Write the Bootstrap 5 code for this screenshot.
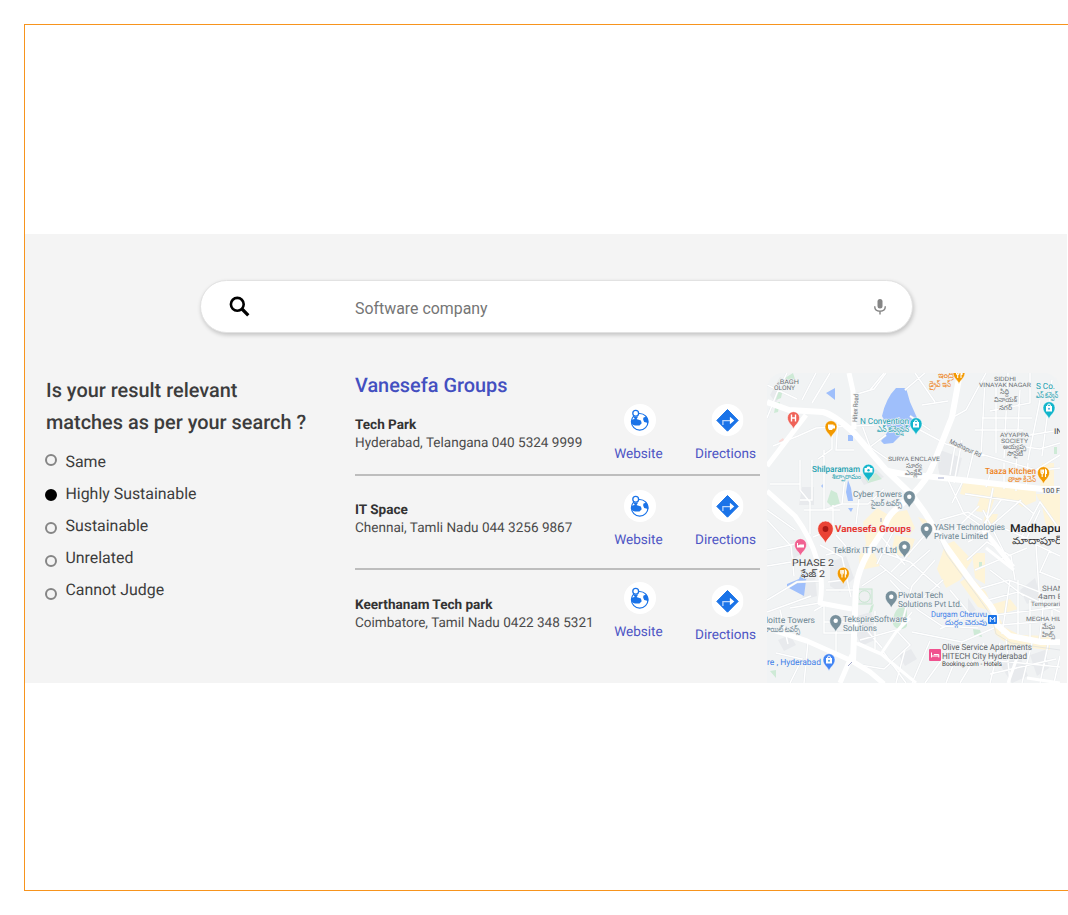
<!DOCTYPE html>
<html lang="en">
<head>
<meta charset="utf-8">
<meta name="viewport" content="width=device-width, initial-scale=1">
<title>Search relevance</title>
<link href="https://cdn.jsdelivr.net/npm/bootstrap@5.3.0/dist/css/bootstrap.min.css" rel="stylesheet">
<style>
body{font-family:Roboto,sans-serif;background:#fff;overflow:hidden;color:#3c3c3c;text-rendering:geometricPrecision}
.frame{margin:24px 0 0 24px;height:867px;border:1px solid #f7941d;border-right:0;padding-top:209px}
.panel{background:#f4f4f4;height:449px;width:1042px;padding-top:46px}
.searchbar{width:713px;height:53px;margin-left:175px;border-radius:27px;border:1px solid #e2e2e2;background:#fff;box-shadow:1px 2px 4px rgba(0,0,0,.2);padding:0 25px 0 28px}
.searchbar input{border:0;outline:0;background:none;margin-left:104px;padding:4px 0 0;font-size:15.900px;color:#757575}
.searchbar input::placeholder{color:#757575;opacity:1}
.columns{display:grid;grid-template-columns:310px 405px 300px;column-gap:0;padding-left:20px;margin-top:40px;height:310px}
.ask{font-size:19.900px;line-height:32px;font-weight:500;margin:2px 0 0 1px}
.choices{margin-top:7px}
.choice{height:32px;font-size:15.900px;line-height:32px}
.choice input{appearance:none;width:12px;height:12px;border:2px solid #858585;border-radius:50%;margin:0 8.500px 0 0;flex:none}
.choice input:checked{background:#000;border-color:#000}
.company{font-size:19.900px;line-height:24px;font-weight:500;color:#434fc0;margin:1px 0 0}
.place{border-bottom:2px solid #bdbdbd}
.place:last-child{border:0}
.addr{width:253px;font-size:13.550px;line-height:18px;white-space:nowrap;color:#4a4a4a}
.addr strong{display:block;font-weight:700;color:#333}
.act{font-size:13.550px;line-height:16px;color:#4d55c4;text-decoration:none;text-align:center}
.act svg{display:block;margin:0 auto 10px}
.act-web{margin-left:6px;width:49px}
.act-web svg{transform:translateX(1px)}
.act-dir{margin-left:32px;width:61px}
.act-dir svg{transform:translateX(1.500px)}
.mapbox{border-radius:16px 16px 0 0;overflow:hidden;margin-left:7px;width:293px;height:310px}
.mapbox text{font-family:Roboto,"Noto Sans",sans-serif;paint-order:stroke;stroke:#f1f3f4;stroke-width:1.5px;stroke-linejoin:round}
</style>
</head>
<body>
<svg width="0" height="0" class="position-absolute">
<defs>
<symbol id="globe" viewBox="0 0 32 32"><circle cx="16" cy="16" r="16" fill="#fff"/><circle cx="15.7" cy="17.8" r="8.300" fill="none" stroke="#1a73e8" stroke-width="1.2"/><path d="M7.300 15.800l4.400-1 5.200 1.800.8 2.700-2.200 2.100-4.500.1-2.200-.7-1.300-1.500zM19.300 13.700l3-1.500 2 3.400-.1 3.600-2-.8-2-.5-1-2.100z" fill="#1a73e8"/><path d="M11.700 16.500l-2.500-4h5z" fill="#1a73e8"/><circle cx="11.700" cy="9.300" r="2.900" fill="#fff" stroke="#1a73e8" stroke-width="1.300"/></symbol>
<symbol id="turn" viewBox="0 0 32 32"><circle cx="16" cy="16" r="16" fill="#fff"/><path d="M16 5.500l10.700 10.900L16 27.200 5.300 16.400z" fill="#1a73e8" stroke="#1a73e8" stroke-linejoin="round"/><path d="M11.400 21v-4.400h9" fill="none" stroke="#b9d5fb" stroke-width="1.300"/><path d="M18.400 12.800l4.400 3.700-4.400 3.700z" fill="#fff"/></symbol>
<path id="pin" d="M0 0C-1-4-6-6-6-11.300A6 6 0 0 1 6-11.300C6-6 1-4 0 0z"/>
<g id="fork" stroke="#fff" fill="none" stroke-width="1.1"><path d="M-2.500-14.500v3q0 1 1.200 1v3.500M-1.200-14.500v3M0-14.500v3q0 1-1.200 1M2-7v-7.500q1.500 1 1 4h-1"/></g>
<g id="shop"><path d="M-3-13h6v5.500h-6z" fill="#fff"/><path d="M-1.500-13q0-2 1.500-2t1.500 2" fill="none" stroke="#fff"/><circle cy="-10.200" r="1" fill="#4aa5dd"/></g>
</defs>
</svg>
<main class="frame">
<section class="panel">
<form class="searchbar d-flex align-items-center">
<svg width="22" height="22" viewBox="0 0 22 22"><circle cx="8.300" cy="8.300" r="6.400" fill="none" stroke="#000" stroke-width="2.600"/><path d="M13 13l6.300 6.300" stroke="#000" stroke-width="3.300"/></svg>
<input type="text" placeholder="Software company" aria-label="Search">
<svg class="ms-auto" width="14" height="18" viewBox="0 0 14 18"><rect x="4.500" y="1" width="5" height="9.500" rx="2.500" fill="#858585"/><path d="M1.700 8.200c0 3.200 2.300 5 5.300 5s5.300-1.800 5.300-5M7 13v3.500" fill="none" stroke="#858585" stroke-width="1.400"/></svg>
</form>
<div class="columns">
<div>
<h2 class="ask">Is your result relevant<br>matches as per your search ?</h2>
<div class="choices">
<label class="choice d-flex align-items-center"><input type="radio" name="r" style="margin-top:-5px">Same</label>
<label class="choice d-flex align-items-center"><input type="radio" name="r" checked style="margin-top:2px">Highly Sustainable</label>
<label class="choice d-flex align-items-center"><input type="radio" name="r" style="margin-top:4px">Sustainable</label>
<label class="choice d-flex align-items-center"><input type="radio" name="r" style="margin-top:6px">Unrelated</label>
<label class="choice d-flex align-items-center"><input type="radio" name="r" style="margin-top:8px">Cannot Judge</label>
</div>
</div>
<div>
<h2 class="company">Vanesefa Groups</h2>
<div class="place d-flex" style="height:78px;padding-top:6px"><div class="addr" style="padding-top:12px"><strong>Tech Park</strong>Hyderabad, Telangana 040 5324 9999</div><a class="act act-web" href="#"><svg width="32" height="32"><use href="#globe"/></svg>Website</a><a class="act act-dir" href="#"><svg width="32" height="32"><use href="#turn"/></svg>Directions</a></div>
<div class="place d-flex" style="height:94px;padding-top:14px"><div class="addr" style="padding-top:11px"><strong>IT Space</strong>Chennai, Tamli Nadu 044 3256 9867</div><a class="act act-web" href="#"><svg width="32" height="32"><use href="#globe"/></svg>Website</a><a class="act act-dir" href="#"><svg width="32" height="32"><use href="#turn"/></svg>Directions</a></div>
<div class="place d-flex" style="height:92px;padding-top:12px"><div class="addr" style="padding-top:14px"><strong>Keerthanam Tech park</strong>Coimbatore, Tamil Nadu 0422 348 5321</div><a class="act act-web" href="#"><svg width="32" height="32"><use href="#globe"/></svg>Website</a><a class="act act-dir" href="#" style="padding-top:3px"><svg width="32" height="32"><use href="#turn"/></svg>Directions</a></div>
</div>
<div class="mapbox">
<svg class="d-block" width="293" height="310" viewBox="767 373 293 310">
<rect x="767" y="373" width="293" height="310" fill="#f1f3f4"/>
<!-- built-up blocks -->
<g fill="#e8eaed">
<path d="M940 450l22 8-5 20-8 4-9-5-2-10zM802 487h12v18h-15zM858 475l18-6 8 8-20 8zM830 562l16-6 8 22-14 14-10-6zM790 540l8 0 4 14-8 4zM800 580l15-4 2 20-14 4zM856 633l16-5 3 12-14 6zM857 616l14-4 3 12-15 5zM1000 665l20-9 8 20-16 7zM1030 655l15-5 4 18-12 8zM770 395l10-18 8 4-12 22zM778 640l12-5 6 10-12 6zM1020 590l15-12 6 20-14 6zM899 655l12-6 6 10-12 7zM968 598l8 12-8 4z"/>
</g>
<!-- commercial areas -->
<g fill="#fef4d8">
<path d="M963 482l73 7v12l-14 6-8-6-20-1-4 13-15-2 5-13-20-4zM1036 494h24v32h-14l-4-20zM1042 463h12v26h-14zM863 522l14-14 10 6 20-4 8 18-6 8-18-8-14 8-4 14 7 16-20 4-1-14 7-12zM895 535l20 4-6 18-18-3zM918 517l11 4-5 5zM945 545l9-4 18 19-12 20-14 8-9-19zM972 553h13v31l-10-6zM960 582l10-6 16 16 8 20-16-5zM990 605l20-6 8 10-20 6 6 12 16 8 30 1v14l-40-4-15-12zM985 514h13l-3 10h-12z"/>
</g>
<!-- parks and lakes -->
<g fill="#ceead6"><path d="M785 378l8-5 2 6-8 6zM778 389h5l-2 9-5 2zM776 403l4-1-2 10-4 1zM831 490l6 3 3 11-9 2-4-4zM864 477l12-4 6 6-14 4zM893 620c2-16 14-16 14-8v14c-4 6-16 3-14-6zM871 606l3-2-2 8-3 1zM770 671l6-1v8zM979 562h3v6h-3zM973 629l7 1 2 7-8-2zM1054 447h3v7h-3z"/></g>
<path d="M779 441l4-3 2 4-5 2z" fill="#fbd9d6"/>
<g fill="#9fbffb"><path d="M896 388h10l4 14 8 18-13 11-12 12-9 1-3-3 8-11-7-14q4-18 14-28zM826 393l9-5v12l-5-4zM848 435h5v6h-5zM787 584l12-5 4-10 4 4-3 23-17-9zM848 480l3 8 2 13-5 0-2-9zM848 508h5l-2 4zM821 486l2-2v4z"/></g>
<!-- lanes -->
<g fill="none" stroke="#e5e8eb" stroke-width="2.400"><path id="lanes" d="M767 418l10-25 10-20M773 446l25-10 18-8 58-3M800 460v30l10 12v32M800 484h-30M812 460v40h-12M824 450v60M832 425v24l-14 10M838 420l-2 30h18M854 395l20-6 12-16M802 400l14-27M812 403l18-30M767 385l30 14M870 390l14-17M862 425l8 22 20 14M870 447l16-12M824 510l18-6h26l16-15M842 504l4-36M860 490l-4 34M833 505v24l-20 8M835 529l24 1M804 510l36 0M767 510l28 20M767 520l24 26 3 30M767 550l28-6M767 566l24-4M767 600l30-18 24-1M767 612l44-16M780 610l8 34M808 642l-4 41M790 683l12-24-26-6M814 611l10-6v28h28M824 622h28M836 622v30M820 603l-30 5M826 555l28-8M820 545l22 12 9 40M836 535l14 16M844 580l-16 2M826 590h27M922 405l26-4M905 390l20-17M920 430l26 14 90 26 24-15M935 402l-20-29M930 430l-20-14M948 420l18-10 20-37M956 440l-6 35M962 440l-8 43M974 450l-8 33M985 380l-4 76M996 383v70M1008 373l-4 85M1020 390l-4 80M1030 373v30l-40 8M982 418h50M975 430h48M1000 443l40 6 20-6M1040 400l-12 60M1052 380l-10 76M1060 430l-36 6M990 475l-4 12M1004 463v26M1016 465v26M1028 463l-2 26M1060 468l-38 4M948 480l16 34 20 14M962 483l-10 20M993 488l-8 40-20 12M1001 500l-18 25M965 494l55 8 14 12M955 530l24-24M940 520l28-8 14 8M985 531l36-31M983 510l30 60M968 542l30-16 38 16M967 560l20-18 24 14 4 24M975 570l52-22M990 570l34 26M1020 540l20-38 20 28M1040 510l-14 30 34 16M1036 545l4 60M1050 550l-10 22 20 8M975 590l34-10 51 20M988 600l30-8 42 20M1010 580l-8 54M1018 580v54M1030 600v40M1044 600l-5 44M1052 610v34M996 615l64-8M1000 625l60-5M925 535l-20 23-14 14M930 550l-30 26M935 560l-23 26M943 580l-20 18M950 590l20 24M886 570l-24 16M870 548l40 14 30 26M880 565l29 24M880 535l25 30M895 528l-18 36M890 580l28 30 24 16 36 2M860 640l36-10 14 15-26 24-24-4M858 620l24 28M875 611v38M896 632l16-20M912 586l-12 44M912 632l50 10 32-14M905 650l-9 33M882 650l24 33M912 683l18-42M925 683l26-36M946 683l16-40M960 683l24-40M990 683l10-40M1010 683l-4-44M1022 683l10-40M1040 683l8-38M1054 683l6-27M990 660l70 7M990 674l66-15M940 629l24-12"/></g>
<use href="#lanes" fill="none" stroke="#fff" stroke-width="1.500"/>
<rect x="857" y="589" width="15" height="15" fill="#e9eced" stroke="#c5e6ce"/><circle cx="864.500" cy="596.500" r="5.800" fill="#eef0f1" stroke="#c5e6ce"/>
<!-- main roads -->
<g fill="none" stroke="#fff" stroke-linejoin="round">
<path stroke-width="6" d="M767 402l22 8 34 2q12 3 32 22l31 36 26 25 13 18 20 32 26 36 19 24q6 8 7 20l13 11 31 6h19M960 373l-8 44-19 48q-5 14-21 30l-18 16q-7 6-10 18l-16 24q-10 18-12 34l-3 74M886 470q10 4 39 6l117 13h18"/>
<path stroke-width="5" d="M767 466l39-51M767 491l28 25q16 22 22 44 7 19 3 43l32 6M849 373l4 18 1 38M767 628l40 13 45 20 18 11 14 12M852 655l-12 28M982 528l31 39"/>
<path stroke-width="3" d="M853 642l28 12 15-22 14-14M1014 570l-28-22M858 643l22 10 36 30M1018 655l-10 28M1027 678l33 5"/>
</g>
<path d="M937 535l10 20 31 42 14 20 4 17 15 9 49 7" fill="none" stroke="#d8dbdf" stroke-width=".6"/>
<path d="M938 478h6M881 518v4M848 666l4-4" stroke="#a3a9cb" fill="none"/>
<!-- labels -->
<g font-size="7" fill="#6f7478">
<text x="777" y="384" font-size="6.500" textLength="22">ₑBAGH</text><text x="774" y="390" font-size="6.500" textLength="21">OLONY</text>
<text transform="translate(857 422) rotate(-87)" font-size="6.500" textLength="28">Hitex Road</text>
<text x="994" y="381" font-size="6" textLength="22">SIDDHI</text><text x="979" y="387" font-size="6" textLength="52">VINAYAK NAGAR</text><text x="1000" y="394" textLength="9">సిద్ది</text><text x="994" y="402" textLength="23">వినాయక్</text><text x="999" y="410" textLength="13">నగర్</text>
<text x="1000" y="436.500" font-size="6" textLength="29">AYYAPPA</text><text x="1001" y="442.500" font-size="6" textLength="27">SOCIETY</text><text x="1003" y="449" textLength="23">అయ్యప్ప</text><text x="1007" y="456" textLength="16">సొసైటీ</text>
<text x="888" y="461" font-size="6" textLength="52">SURYA ENCLAVE</text><text x="906" y="468" textLength="16">సూర్య</text><text x="905" y="475" textLength="17">ఎంక్లేవ్</text>
<text transform="translate(949 443) rotate(25)" font-size="6.500" textLength="34">Madhapur Rd</text>
<text x="1042" y="493" fill="#444" textLength="28">100 Feet</text><text x="1054" y="434" font-size="8" fill="#444" textLength="14">IND</text>
<text x="1042" y="590.500" font-size="7.500" textLength="26">SHANT</text><text x="1038" y="599" font-size="7.500" textLength="30">4am Bir</text><text x="1031" y="606" font-size="6" textLength="34">Temporarily</text>
<text x="1026" y="621" font-size="6" textLength="43">MEGHA HILLS</text><text x="1042" y="629" textLength="13">మేఘ</text><text x="1042" y="637" textLength="13">హిల్స్</text>
</g>
<g font-size="8.500" fill="#1a9fb0"><text x="860" y="423.500" textLength="49">N Convention</text><text x="877" y="432" textLength="32">ఎన్ కన్వెన్షన్</text><text x="812" y="471.500" font-weight="500" textLength="48">Shilparamam</text><text x="832" y="479" font-size="7" textLength="29">శిల్పారామం</text><text x="1036" y="389" textLength="19">S Co.</text><text x="1036" y="398" textLength="22">ఎస్ కన్వెన్</text></g>
<g font-size="8.500" fill="#6c8592"><text x="853" y="497" textLength="49">Cyber Towers</text><text x="871" y="505.500" textLength="31">సైబర్ టవర్స్</text><text x="934" y="530" textLength="71">YASH Technologies</text><text x="934" y="538.500" textLength="54">Private Limited</text><text x="833" y="552.500" textLength="64">TekBrix IT Pvt Ltd</text><text x="898" y="598" textLength="45">Pivotal Tech</text><text x="898" y="607" textLength="64">Solutions Pvt Ltd.</text><text x="843" y="622" textLength="64">TekspireSoftware</text><text x="843" y="630.500" textLength="34">Solutions</text><text x="766" y="623" textLength="49">loitte Towers</text><text x="764" y="632" textLength="36">లాయిట్ టవర్స్</text></g>
<g font-size="8.500" fill="#ee8322"><text x="938" y="378" textLength="16">ఇంద్రి</text><text x="929" y="387" textLength="22">డ్రైవ్ ఇన్</text><text x="985" y="473.500" font-weight="500" textLength="51">Taaza Kitchen</text><text x="1008" y="481.500" textLength="28">తాజా కిచెన్</text></g>
<g font-size="8.500" fill="#3f80e8"><text x="931" y="617" font-size="8" textLength="56">Durgam Cheruvu</text><text x="945" y="625" font-size="7.500" textLength="42">దుర్గం చెరువు</text><text x="767" y="665" textLength="54">re , Hyderabad</text></g>
<g fill="#62676b" font-size="8.500"><text x="942" y="650" textLength="90">Olive Service Apartments</text><text x="942" y="658.500" textLength="85">HITECH City Hyderabad</text><text x="942" y="666" font-size="6.500" fill="#444" textLength="60">Booking.com - Hotels</text></g>
<text x="792" y="566" font-size="9.500" fill="#444" textLength="42">PHASE 2</text><text x="801" y="577" font-size="9.500" fill="#444" textLength="24">ఫేజ్ 2</text>
<text x="1010" y="531.500" font-size="11" font-weight="500" fill="#222" textLength="55">Madhapur</text><text x="1012" y="544" font-size="10" fill="#444" textLength="50">మాదాపూర్</text>
<text x="835" y="532" font-size="9.500" font-weight="700" fill="#e63b34" textLength="76">Vanesefa Groups</text>
<!-- pins -->
<g stroke="#fff" stroke-width=".5">
<use href="#pin" transform="translate(793.500 429)" fill="#ef6258"/><use href="#pin" transform="translate(831 438)" fill="#f29900"/><use href="#pin" transform="translate(959 384)" fill="#f29900"/><use href="#pin" transform="translate(1043.500 484)" fill="#f29900"/><use href="#pin" transform="translate(843.300 584.500)" fill="#f29900"/>
<use href="#pin" transform="translate(916 435)" fill="#12b5cb"/><use href="#pin" transform="translate(868.500 481.500)" fill="#12b5cb"/><use href="#pin" transform="translate(1049 419)" fill="#12b5cb"/>
<use href="#pin" transform="translate(909.300 508)" fill="#78909c"/><use href="#pin" transform="translate(926.500 540)" fill="#78909c"/><use href="#pin" transform="translate(904.500 558)" fill="#78909c"/><use href="#pin" transform="translate(891.300 608)" fill="#78909c"/><use href="#pin" transform="translate(835.700 632)" fill="#78909c"/>
<use href="#pin" transform="translate(800.500 556)" fill="#f06292"/><use href="#pin" transform="translate(829 671)" fill="#4285f4"/>
<use href="#pin" transform="translate(825.500 543.500) scale(1.300)" fill="#ea4335"/>
</g>
<circle cx="825.500" cy="529" r="2.900" fill="#a81915"/>
<g fill="#fff"><circle cx="909.300" cy="496.700" r="2.200"/><circle cx="926.500" cy="528.700" r="2.200"/><circle cx="904.500" cy="546.700" r="2.200"/><circle cx="891.300" cy="596.700" r="2.200"/><circle cx="835.700" cy="620.700" r="2.200"/><path d="M828 424.500h5.500v1h1.500v3h-2l-1 1.500h-3l-1-2zM797 543v4.500h7v-3h-4l-2 1v-2.500zM864.500 468h2l1-1.500h2l1 1.500h2v4.500h-8z"/></g>
<circle cx="868.500" cy="470.300" r="1.200" fill="#12b5cb"/>
<path d="M791.500 414.500v7M795.500 414.500v7M791.500 418h4" stroke="#fff" stroke-width="1.400"/>
<use href="#fork" x="959" y="385"/><use href="#fork" x="1043.500" y="484"/><use href="#fork" x="843.300" y="584.500"/>
<use href="#shop" x="916" y="435"/><use href="#shop" x="1049" y="419"/><use href="#shop" x="829" y="671"/>
<rect x="988" y="615" width="9" height="9" rx="1" fill="#1a73e8"/><path d="M990.200 622v-5l2.300 3 2.300-3v5" fill="none" stroke="#fff"/>
<rect x="929" y="649" width="12" height="12" rx="1" fill="#f0528f"/><path d="M931.500 652.500v5M931.500 656h7.500M938.800 657.500v-3h-5" fill="none" stroke="#fff"/>
</svg>
</div>
</div>
</section>
</main>
<script src="https://cdn.jsdelivr.net/npm/bootstrap@5.3.0/dist/js/bootstrap.bundle.min.js"></script>
<script>
// Scale map labels as a whole so that conjunct letters stay joined.
document.querySelectorAll('.mapbox text').forEach(t => t.setAttribute('lengthAdjust', 'spacingAndGlyphs'));
</script>
</body>
</html>
